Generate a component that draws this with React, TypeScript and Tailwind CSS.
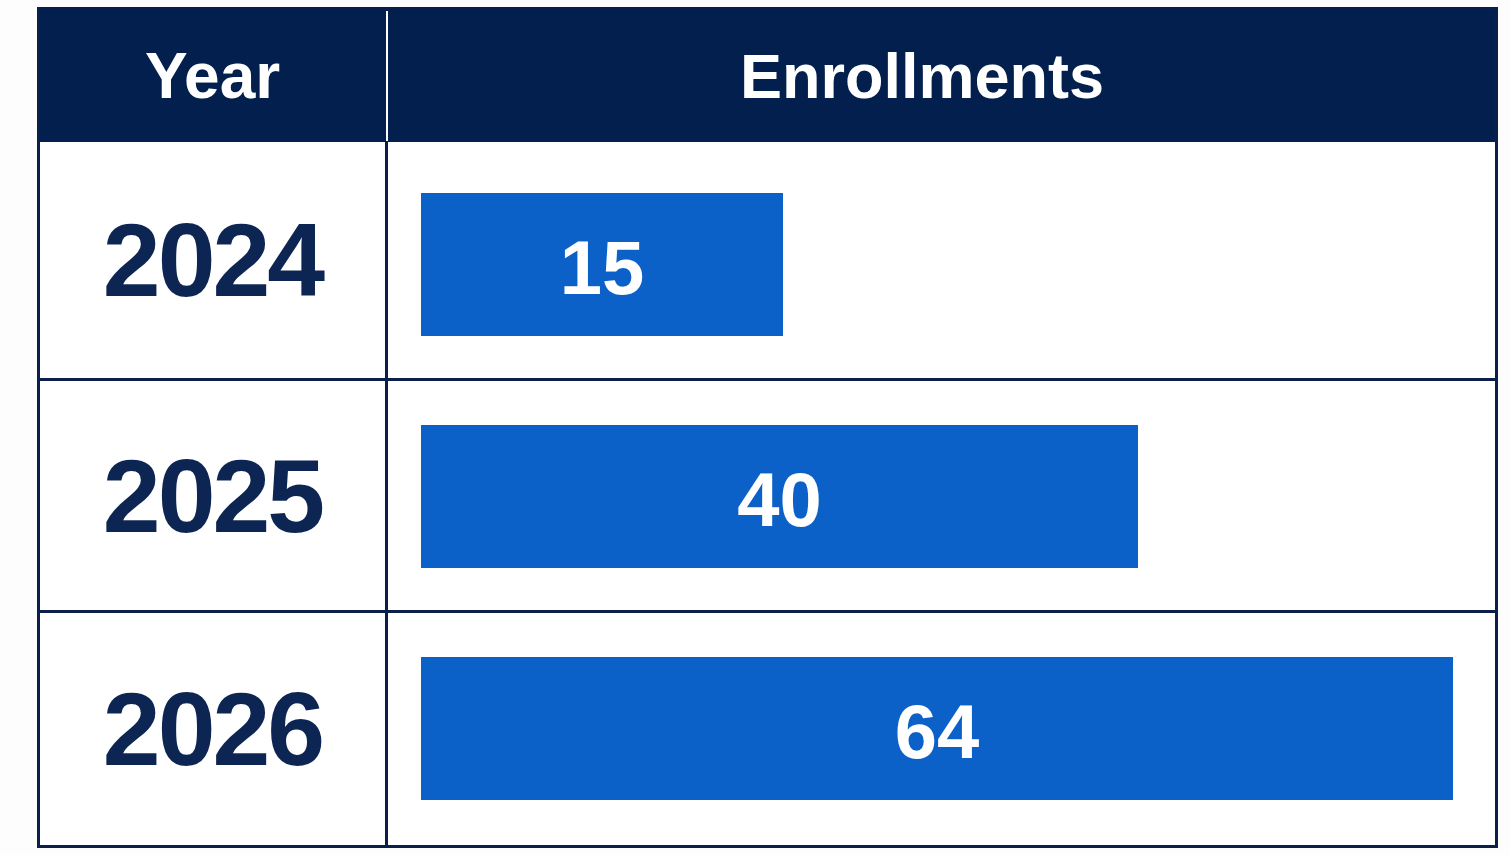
const rows = [
  { year: "2024", value: 15, pad: "pt-[51px] pb-[42px]", bar: "w-[362px]", line: "" },
  { year: "2025", value: 40, pad: "pt-[44px] pb-[42px]", bar: "w-[717px]", line: "border-t-[3px]" },
  { year: "2026", value: 64, pad: "pt-[44px] pb-[45px]", bar: "w-[1032px]", line: "border-t-[3px]" },
];

export default function App() {
  return (
    <div className="min-h-[855px] bg-[#fdfdfd] pl-[37px] pt-[7px] font-['Liberation_Sans',Arial,sans-serif]">
      <div className="w-[1461px] border-[3px] border-[#0a1f4a] bg-white">
        {/* header */}
        <div className="flex h-[132px] bg-[#021f4d] text-white">
          <div className="flex w-[345px] items-center justify-center text-[64px] font-bold leading-none">
            Year
          </div>
          <div className="flex w-[3px] justify-center py-[1px]">
            <div className="w-[2px] bg-white" />
          </div>
          <div className="flex flex-1 items-center justify-center pr-[39px] text-[63px] font-bold leading-none">
            Enrollments
          </div>
        </div>

        {/* body */}
        {rows.map((row) => (
          <div key={row.year} className={`flex border-[#0a1f4a] ${row.line}`}>
            <div className="flex w-[348px] items-center justify-center border-r-[3px] border-[#0a1f4a] text-[104px] font-bold leading-none tracking-[-3px] text-[#0c2552]">
              {row.year}
            </div>
            <div className={`flex-1 pl-[33px] ${row.pad}`}>
              <div
                className={`flex h-[143px] items-center justify-center bg-[#0b61c8] pt-[6px] text-[76px] font-bold leading-none text-white ${row.bar}`}
              >
                {row.value}
              </div>
            </div>
          </div>
        ))}
      </div>
    </div>
  );
}
